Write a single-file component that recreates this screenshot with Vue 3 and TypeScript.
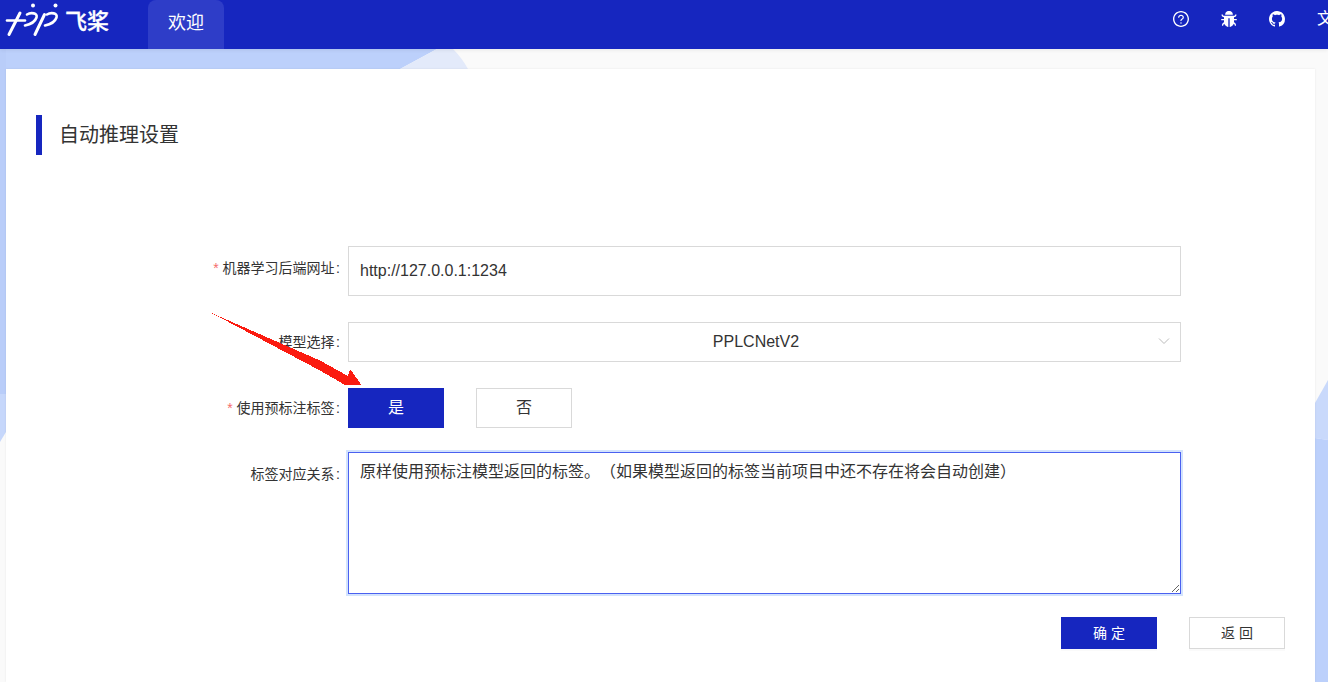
<script setup lang="ts">
import { ref } from 'vue'

const mlUrl = ref('http://127.0.0.1:1234')
const relation = ref('原样使用预标注模型返回的标签。（如果模型返回的标签当前项目中还不存在将会自动创建）')
const usePre = ref(true)
</script>

<template>
  <div class="page">
    <!-- background shapes -->
    <svg class="bg" width="1328" height="682" viewBox="0 0 1328 682">
      <rect x="0" y="49" width="1328" height="633" fill="#fafafa" />
      <path d="M0 49H437L400 69L0 290Z" fill="#bcd0fb" />
      <path d="M437 49H453Q462 58 468 69H400Z" fill="#e3eafa" />
      <rect x="0" y="49" width="6" height="345" fill="#b9cdf9" />
      <path d="M0 394H6V432L0 442Z" fill="#c6d7fb" />
      <path d="M1315 403L1328 380V440L1315 438Z" fill="#c9d9fb" />
      <path d="M1315 438L1328 440V682H1315Z" fill="#bcd0fb" />
    </svg>

    <header class="navbar">
      <div class="logo">
        <svg width="62" height="40" viewBox="0 0 62 40" fill="none" stroke="#fff" stroke-width="3" stroke-linecap="round">
          <path d="M7 20.5H25" stroke-width="2.6" />
          <path d="M9 34.5L20 13" />
          <path d="M27 14.5C31 12 38 13 36.5 17.5C35 22 30 24.5 25 25.5" stroke-width="2.6" />
          <path d="M35 34.5L44.5 14.5" />
          <path d="M47 14.5C51 12 58 13 56.5 17.5C55 22 50 24.5 45 25.5" stroke-width="2.6" />
          <circle cx="33" cy="5.5" r="2" fill="#fff" stroke="none" />
          <circle cx="55.5" cy="5.5" r="2" fill="#fff" stroke="none" />
        </svg>
        <span class="logo-text">飞桨</span>
      </div>
      <div class="tab">欢迎</div>
      <div class="nav-right">
        <svg class="icon" viewBox="64 64 896 896" fill="#fff">
          <path d="M512 64C264.6 64 64 264.6 64 512s200.6 448 448 448 448-200.6 448-448S759.4 64 512 64zm0 820c-205.4 0-372-166.6-372-372s166.6-372 372-372 372 166.6 372 372-166.6 372-372 372z" />
          <path d="M623.6 316.7C593.6 290.4 554 276 512 276s-81.6 14.5-111.6 40.7C369.2 344 352 380.7 352 420v7.6c0 4.4 3.6 8 8 8h48c4.4 0 8-3.6 8-8V420c0-44.1 43.1-80 96-80s96 35.9 96 80c0 31.1-22 59.6-56.1 72.7-21.2 8.1-39.2 22.3-52.1 40.9-13.1 19-19.9 41.8-19.9 64.9V620c0 4.4 3.6 8 8 8h48c4.4 0 8-3.6 8-8v-22.7a48.3 48.3 0 0 1 30.9-44.8c59-22.7 97.1-74.7 97.1-132.5.1-39.3-17.1-76-48.3-103.3zM472 732a40 40 0 1 0 80 0 40 40 0 1 0-80 0z" />
        </svg>
        <svg class="icon" viewBox="64 64 896 896" fill="#fff">
          <path d="M304 280h416c4.4 0 8-3.6 8-8 0-40-8.8-76.7-25.9-108.1a184.31 184.31 0 0 0-74-74C596.7 72.8 560 64 520 64h-16c-40 0-76.7 8.8-108.1 25.9a184.31 184.31 0 0 0-74 74C304.8 195.3 296 232 296 272c0 4.4 3.6 8 8 8z" />
          <path d="M940 512H792V412c76.8 0 139-62.2 139-139 0-4.4-3.6-8-8-8h-60c-4.4 0-8 3.6-8 8a63 63 0 0 1-63 63H232a63 63 0 0 1-63-63c0-4.4-3.6-8-8-8h-60c-4.4 0-8 3.6-8 8 0 76.8 62.2 139 139 139v100H84c-4.4 0-8 3.6-8 8v56c0 4.4 3.6 8 8 8h148v96c0 6.5.2 13 .7 19.3C164.1 728.6 116 796.7 116 876c0 4.4 3.6 8 8 8h56c4.4 0 8-3.6 8-8 0-44.2 23.9-82.9 59.6-103.7a273 273 0 0 0 22.7 49c24.3 41.5 59 76.2 100.5 100.5 28.9 16.9 61 28.8 95.3 34.5 4.4 0 8-3.6 8-8V484c0-4.4 3.6-8 8-8h60c4.4 0 8 3.6 8 8v464.2c0 4.4 3.6 8 8 8 34.3-5.7 66.4-17.6 95.3-34.5a281.38 281.38 0 0 0 123.2-149.5A120.4 120.4 0 0 1 836 876c0 4.4 3.6 8 8 8h56c4.4 0 8-3.6 8-8 0-79.3-48.1-147.4-116.7-176.7.4-6.4.7-12.8.7-19.3v-96h148c4.4 0 8-3.6 8-8v-56c0-4.4-3.6-8-8-8z" />
        </svg>
        <svg class="icon" viewBox="0 0 16 16" fill="#fff">
          <path d="M8 0C3.58 0 0 3.58 0 8c0 3.54 2.29 6.53 5.47 7.59.4.07.55-.17.55-.38 0-.19-.01-.82-.01-1.49-2.01.37-2.53-.49-2.69-.94-.09-.23-.48-.94-.82-1.13-.28-.15-.68-.52-.01-.53.63-.01 1.08.58 1.23.82.72 1.21 1.87.87 2.33.66.07-.52.28-.87.51-1.07-1.78-.2-3.64-.89-3.64-3.95 0-.87.31-1.59.82-2.15-.08-.2-.36-1.02.08-2.12 0 0 .67-.21 2.2.82.64-.18 1.32-.27 2-.27s1.36.09 2 .27c1.53-1.04 2.2-.82 2.2-.82.44 1.1.16 1.92.08 2.12.51.56.82 1.27.82 2.15 0 3.07-1.87 3.75-3.65 3.95.29.25.54.73.54 1.48 0 1.07-.01 1.93-.01 2.2 0 .21.15.46.55.38A8.01 8.01 0 0 0 16 8c0-4.42-3.58-8-8-8z" />
        </svg>
        <span class="lang">文</span>
      </div>
    </header>

    <main class="main">
      <section class="card">
        <div class="title-row">
          <i class="title-bar"></i>
          <h1 class="title">自动推理设置</h1>
        </div>

        <form class="form" @submit.prevent>
          <div class="row first">
            <label class="label tall"><em>*</em>机器学习后端网址<b>:</b></label>
            <input v-model="mlUrl" class="input" type="text" />
          </div>

          <div class="row">
            <label class="label">模型选择<b>:</b></label>
            <div class="select">
              <span>PPLCNetV2</span>
              <svg class="caret" width="12" height="8" viewBox="0 0 12 8" fill="none" stroke="#bbb" stroke-width="1">
                <path d="M1 1.5L6 6.5L11 1.5" />
              </svg>
            </div>
          </div>

          <div class="row">
            <label class="label"><em>*</em>使用预标注标签<b>:</b></label>
            <div class="choices">
              <button type="button" class="btn" :class="{ primary: usePre }">是</button>
              <button type="button" class="btn" :class="{ primary: !usePre }">否</button>
            </div>
          </div>

          <div class="row area-row">
            <label class="label tall">标签对应关系<b>:</b></label>
            <textarea v-model="relation" class="area"></textarea>
          </div>
        </form>

        <div class="footer">
          <button type="button" class="btn small primary">确 定</button>
          <button type="button" class="btn small">返 回</button>
        </div>
      </section>
    </main>

    <!-- annotation arrow on the screenshot -->
    <svg class="arrow" width="170" height="90" viewBox="210 312 170 90" shape-rendering="crispEdges">
      <path d="M211.5 313L320 360.5L348 376L350 369L361.5 385L345 385L320 370.5Z" fill="#fb1b10" />
    </svg>
  </div>
</template>

<style scoped>
.page {
  position: relative;
  width: 1328px;
  height: 682px;
  overflow: hidden;
  display: flex;
  flex-direction: column;
  font-family: "Liberation Sans", "Noto Sans CJK SC", sans-serif;
  color: #333;
}
.bg {
  position: absolute;
  left: 0;
  top: 0;
}
.navbar {
  position: relative;
  flex: none;
  height: 49px;
  display: flex;
  background: #1626bf;
  color: #fff;
  box-shadow: 0 1px 4px rgba(0, 0, 0, 0.08);
}
.logo {
  width: 148px;
  display: flex;
  align-items: flex-start;
}
.logo-text {
  margin: 8px 0 0 3px;
  font-size: 22px;
  line-height: 28px;
  font-weight: 500;
  -webkit-text-stroke: 0.3px #fff;
}
.tab {
  width: 76px;
  height: 49px;
  line-height: 46px;
  text-align: center;
  font-size: 18px;
  background: #2e3dc8;
  border-radius: 8px 8px 0 0;
}
.nav-right {
  margin-left: auto;
  display: flex;
  align-items: flex-start;
  gap: 32px;
  padding-top: 11px;
  margin-right: -7px;
}
.icon {
  width: 16px;
  height: 16px;
}
.lang {
  font-size: 16px;
  line-height: 16px;
  width: 18px;
}
.main {
  position: relative;
  flex: 1;
  min-height: 0;
  padding: 20px 13px 0 6px;
}
.card {
  height: 100%;
  box-sizing: border-box;
  background: #fff;
  box-shadow: 0 0 2px rgba(0, 0, 0, 0.08);
  padding: 46px 30px 0;
}
.title-row {
  display: flex;
  align-items: center;
  height: 40px;
}
.title-bar {
  width: 6px;
  height: 40px;
  background: #1626bf;
}
.title {
  margin: 0 0 4px 17px;
  font-size: 20px;
  font-weight: 400;
  color: #333;
}
.form {
  margin-top: 91px;
  display: flex;
  flex-direction: column;
  gap: 26px;
}
.row {
  display: flex;
  align-items: flex-start;
  width: 1145px;
}
.area-row {
  margin-top: -2px;
}
.label {
  flex: none;
  width: 304px;
  padding-right: 8px;
  text-align: right;
  font-size: 14px;
  line-height: 40px;
  color: #333;
}
.label.tall {
  line-height: 44px;
}
.label em {
  font-style: normal;
  color: #f56c6c;
  margin-right: 4px;
}
.label b {
  font-weight: 400;
  margin-left: 1.5px;
}
.input {
  flex: 1;
  height: 50px;
  box-sizing: border-box;
  padding: 0 11px;
  border: 1px solid #d9d9d9;
  font: inherit;
  font-size: 16px;
  color: #333;
  outline: none;
}
.select {
  flex: 1;
  position: relative;
  height: 40px;
  box-sizing: border-box;
  padding-right: 17px;
  border: 1px solid #d9d9d9;
  display: flex;
  align-items: center;
  justify-content: center;
  font-size: 16px;
}
.caret {
  position: absolute;
  right: 10px;
  top: 14px;
}
.choices {
  display: flex;
  gap: 32px;
}
.btn {
  width: 96px;
  height: 40px;
  box-sizing: border-box;
  border: 1px solid #d9d9d9;
  background: #fff;
  font: inherit;
  font-size: 16px;
  color: #333;
  padding: 0 0 4px;
}
.btn.primary {
  background: #1626bf;
  border-color: #1626bf;
  color: #fff;
}
.btn.small {
  height: 32px;
  padding-bottom: 2px;
  font-size: 14px;
  box-shadow: 0 2px 0 rgba(0, 0, 0, 0.02);
}
.area {
  flex: 1;
  height: 142px;
  box-sizing: border-box;
  padding: 7px 11px;
  border: 1px solid #4a60f0;
  box-shadow: 0 0 0 2px #d3e3fd;
  outline: none;
  font: inherit;
  font-size: 16px;
  line-height: 24px;
  color: #333;
  text-spacing-trim: space-all;
}
.footer {
  margin-top: 23px;
  display: flex;
  justify-content: flex-end;
  gap: 32px;
}
.arrow {
  position: absolute;
  left: 210px;
  top: 312px;
}
</style>
